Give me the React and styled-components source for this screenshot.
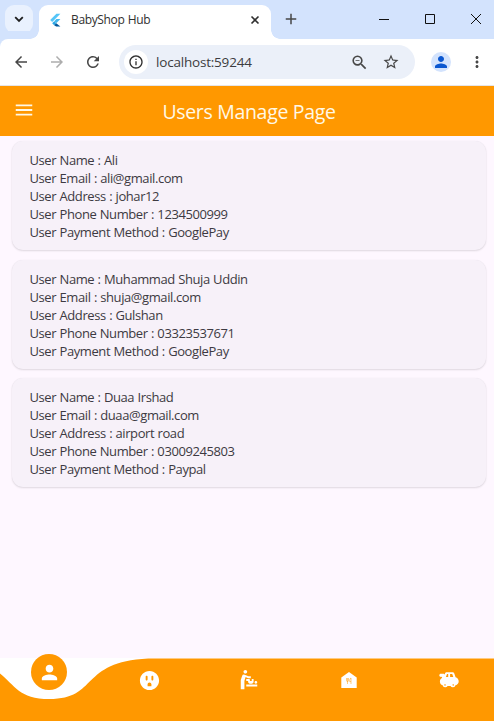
import React from "react";
import styled, { createGlobalStyle } from "styled-components";
import {
  MdArrowBack, MdArrowForward, MdRefresh, MdOutlineInfo, MdZoomOut, MdStarBorder,
  MdPerson, MdMoreVert, MdMenu, MdOutlet, MdBabyChangingStation, MdAdd,
} from "react-icons/md";

const Global = createGlobalStyle`
  * { box-sizing: border-box; }
  body { margin: 0; font-family: "Open Sans", "Noto Sans", sans-serif; overflow: hidden; }
  svg { display: block; flex: none; }
`;

const Window = styled.div`
  width: 494px;
  height: 721px;
  display: flex;
  flex-direction: column;
  background: #fef7ff;
`;

const TabStrip = styled.div`
  height: 39px;
  flex: none;
  display: flex;
  background: #d3e3fd;
`;

const TabSearch = styled.div`
  width: 28px;
  height: 28px;
  margin: 5px 6px 0 5px;
  border-radius: 9px;
  background: #e9f1fe;
  color: #1f1f1f;
  display: grid;
  place-items: center;
`;

const Tab = styled.div`
  position: relative;
  width: 232px;
  height: 34px;
  margin-top: 5px;
  padding: 0 11px 5px 8px;
  display: flex;
  align-items: center;
  border-radius: 9px 9px 0 0;
  background: #fff;
  color: #303030;
  &::before, &::after {
    content: "";
    position: absolute;
    bottom: 0;
    width: 9px;
    height: 9px;
  }
  &::before { right: 100%; background: radial-gradient(circle at 0 0, transparent 8.5px, #fff 9px); }
  &::after { left: 100%; background: radial-gradient(circle at 100% 0, transparent 8.5px, #fff 9px); }
`;

const TabTitle = styled.span`
  flex: 1;
  margin-left: 8px;
  font-size: 12px;
  line-height: 16px;
  letter-spacing: -0.35px;
  word-spacing: 0.6px;
  white-space: nowrap;
`;

const NewTab = styled.div`
  margin: 10px 0 0 11px;
  color: #474747;
`;

const WindowButtons = styled.div`
  margin: 13px 12px 0 auto;
  display: flex;
  gap: 34px;
`;

const Toolbar = styled.div`
  height: 47px;
  flex: none;
  display: flex;
  align-items: center;
  padding: 0 8px 0 12px;
  background: #fff;
  border-bottom: 1px solid #e5e5e8;
  border-top-left-radius: 8px;
  box-shadow: -8px -8px 0 #d3e3fd;
  color: #474747;
`;

const ToolIcon = styled.div`
  margin-right: ${(p) => p.$gap}px;
  color: ${(p) => p.$color || "#474747"};
`;

const AddressBar = styled.div`
  width: 296px;
  flex: none;
  height: 34px;
  display: flex;
  align-items: center;
  padding: 0 15px 0 5px;
  border-radius: 17px;
  background: #ebf0f9;
`;

const SiteInfo = styled.div`
  width: 24px;
  height: 24px;
  border-radius: 50%;
  background: #fff;
  display: grid;
  place-items: center;
  color: #303030;
`;

const Url = styled.span`
  flex: 1;
  margin-left: 8px;
  font-size: 13.5px;
  letter-spacing: -0.2px;
  color: #3c3c40;
`;

const Profile = styled.div`
  width: 20px;
  height: 20px;
  margin: 0 17px 0 16px;
  border-radius: 50%;
  background: #d3e3fd;
  color: #0b57d0;
  display: grid;
  place-items: center;
`;

const AppBar = styled.header`
  height: 50px;
  flex: none;
  display: grid;
  grid-template-columns: 48px 1fr 48px;
  align-items: center;
  background: #ff9800;
  color: #fff8e6;
`;

const MenuButton = styled.div`
  padding: 0 0 2px 13px;
`;

const Title = styled.h1`
  margin: 0;
  padding: 2px 0 0 4px;
  text-align: center;
  font-size: 19.5px;
  line-height: 26px;
  font-weight: 400;
  letter-spacing: -0.32px;
  white-space: nowrap;
`;

const Users = styled.main`
  flex: 1;
  display: flex;
  flex-direction: column;
  gap: 9.5px;
  padding: 5px 8px 0 12px;
`;

const Card = styled.section`
  height: 109px;
  padding: 10px 17.5px 0;
  border-radius: 11px;
  background: #f7f1f9;
  box-shadow: 0 1px 2px rgba(0, 0, 0, 0.12), 0 0 1px rgba(0, 0, 0, 0.08);
`;

const Line = styled.div`
  height: 18px;
  font-size: 13px;
  line-height: 18px;
  letter-spacing: -0.41px;
  word-spacing: 0.4px;
  color: #3d3a42;
  white-space: nowrap;
`;

const BottomNav = styled.nav`
  position: relative;
  height: 63px;
  flex: none;
  display: grid;
  grid-template-columns: repeat(5, 100px);
  justify-items: center;
  background: #fff;
  color: #fff;
`;

const Wave = styled.svg`
  position: absolute;
  inset: 0;
`;

const NavItem = styled.div`
  position: relative;
  height: 44px;
  display: flex;
  align-items: center;
  margin-right: 2px;
`;

const ActiveItem = styled.div`
  position: relative;
  width: 36px;
  height: 36px;
  margin: -4px 2px 0 0;
  border-radius: 50%;
  background: #ff9800;
  display: grid;
  place-items: center;
`;

const FlutterLogo = () => (
  <svg width="16" height="16" viewBox="0 0 16 16">
    <path d="M9.4 1.8h4L5.2 10 3.2 8z" fill="#54c5f8" />
    <path d="M9.4 7.1h4L9.2 11.2 7.2 9.2z" fill="#45b8ee" />
    <path d="m5.2 11.2 2-2 2 2-2 2z" fill="#29a6e5" />
    <path d="m7.2 13.2 2-2 4.2 3.2H9.2z" fill="#01579b" />
  </svg>
);

const ToyCar = () => (
  <svg width="20" height="16" viewBox="0 0 20 16" fill="currentColor">
    <path fillRule="evenodd" d="M7.800.3h5.600c.9 0 1.600.5 1.900 1.300l1.300 3.700c1.800.5 3.100 2.100 3.100 4 0 2-1.300 3.600-3.200 4a2.700 2.700 0 0 1-5 .6H8.600a2.700 2.700 0 0 1-5-.6C1.900 12.800.9 11.200.9 9.400c0-1.600.9-3 2.300-3.700L2.700 4.800C1.500 5.200.3 4.400.3 3.300c0-1.200 1-1.900 2-1.600h2.400c.5 0 .8.3.9.8h.2l.2-.9C6.200.8 6.900.3 7.800.3zM8 2 6.900 5h2.300V2zm3.100 0v3h3.200l-1.100-3zM6 12.200a.7.7 0 1 0 .01 0zm8.200 0a.7.7 0 1 0 .01 0z" />
  </svg>
);

const FoodHouse = () => (
  <svg width="18" height="18" viewBox="0 0 18 18">
    <path d="M9 1 1.300 6.400V17h15.400V6.400z" fill="currentColor" />
    <path d="M6.500 7v2.500q0 1 1 1t1-1V7M7.500 7v6M11 13V7q-1.300.4-1.300 2.300v1.300H11" fill="none" stroke="#ff9800" strokeWidth=".5" />
  </svg>
);

const users = [
  { name: "Ali", email: "ali@gmail.com", address: "johar12", phone: "1234500999", payment: "GooglePay" },
  { name: "Muhammad Shuja Uddin", email: "shuja@gmail.com", address: "Gulshan", phone: "03323537671", payment: "GooglePay" },
  { name: "Duaa Irshad", email: "duaa@gmail.com", address: "airport road", phone: "03009245803", payment: "Paypal" },
];

export default function App() {
  return (
    <Window>
      <Global />
      <TabStrip>
        <TabSearch>
          <svg width="10" height="10" viewBox="0 0 10 10" fill="none" stroke="currentColor" strokeWidth="1.800"><path d="m1.200 3.200 3.800 3.800 3.800-3.800" /></svg>
        </TabSearch>
        <Tab>
          <FlutterLogo />
          <TabTitle>BabyShop Hub</TabTitle>
          <svg width="10" height="10" viewBox="0 0 10 10" fill="none" stroke="currentColor" strokeWidth="1.600"><path d="m1.500 1.500 7 7M8.500 1.500l-7 7" /></svg>
        </Tab>
        <NewTab><MdAdd size={18} /></NewTab>
        <WindowButtons>
          <svg width="12" height="12" fill="none" stroke="#111"><path d="M1 6.500h10" /></svg>
          <svg width="12" height="12" fill="none" stroke="#111"><path d="M1.500 1.500h9v9h-9z" /></svg>
          <svg width="12" height="12" fill="none" stroke="#111"><path d="m1 1 10 10M11 1 1 11" /></svg>
        </WindowButtons>
      </TabStrip>
      <Toolbar>
        <ToolIcon $gap={18}><MdArrowBack size={18} /></ToolIcon>
        <ToolIcon $gap={18} $color="#adadad"><MdArrowForward size={18} /></ToolIcon>
        <ToolIcon $gap={17}><MdRefresh size={18} /></ToolIcon>
        <AddressBar>
          <SiteInfo><MdOutlineInfo size={16} /></SiteInfo>
          <Url>localhost:59244</Url>
          <ToolIcon $gap={13}><MdZoomOut size={19} /></ToolIcon>
          <MdStarBorder size={18} />
        </AddressBar>
        <Profile><MdPerson size={18} /></Profile>
        <MdMoreVert size={18} />
      </Toolbar>
      <AppBar>
        <MenuButton><MdMenu size={22} /></MenuButton>
        <Title>Users Manage Page</Title>
      </AppBar>
      <Users>
        {users.map((u) => (
          <Card key={u.email}>
            <Line>User Name : {u.name}</Line>
            <Line>User Email : {u.email}</Line>
            <Line>User Address : {u.address}</Line>
            <Line>User Phone Number : {u.phone}</Line>
            <Line>User Payment Method : {u.payment}</Line>
          </Card>
        ))}
      </Users>
      <BottomNav>
        <Wave width="494" height="63" viewBox="0 0 494 63">
          <path fill="#ff9800" d="M-49.400.5C19.800 3.900 0 41 49.400 41C98.800 41 79 3.900 148.200.5H494V63H-49.400z" />
        </Wave>
        <ActiveItem><MdPerson size={23} /></ActiveItem>
        <NavItem><MdOutlet size={23} /></NavItem>
        <NavItem><MdBabyChangingStation size={22} /></NavItem>
        <NavItem><FoodHouse /></NavItem>
        <NavItem><ToyCar /></NavItem>
      </BottomNav>
    </Window>
  );
}
